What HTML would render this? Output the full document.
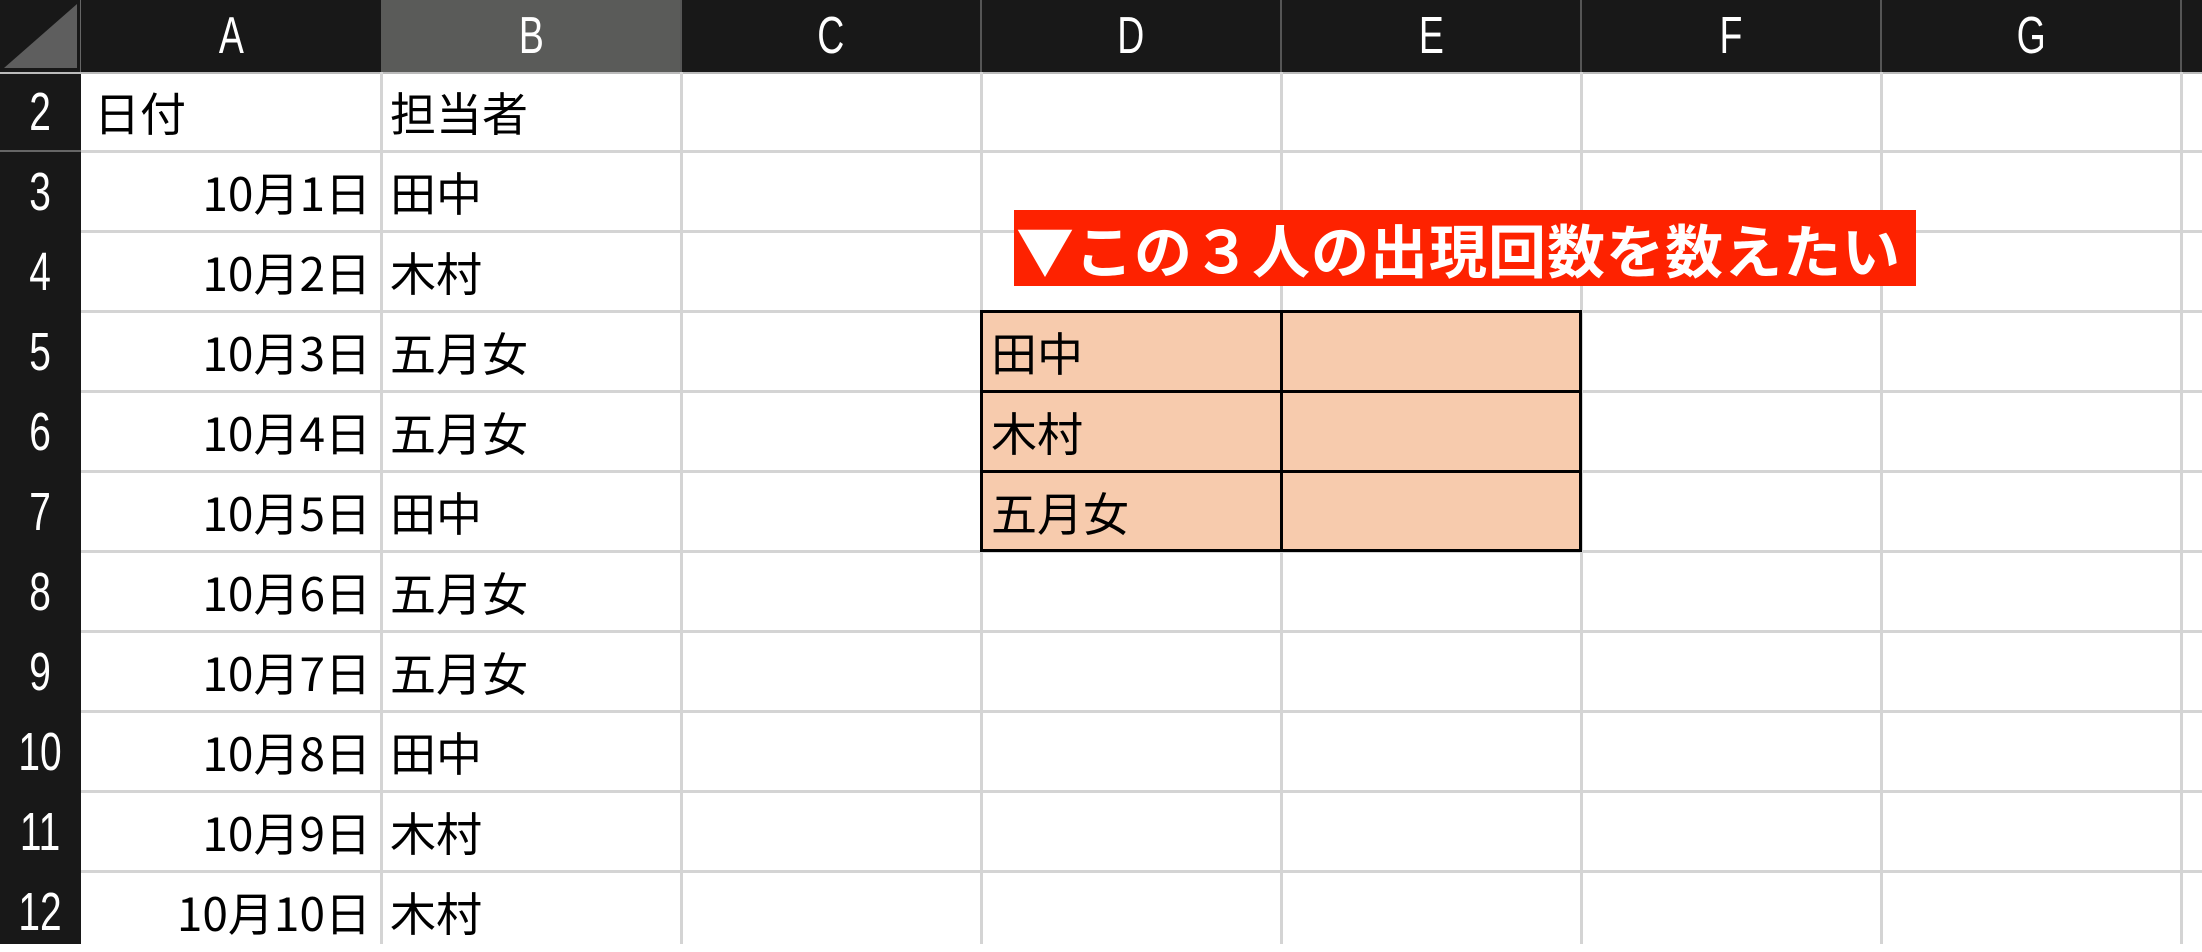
<!DOCTYPE html>
<html><head><meta charset="utf-8"><style>
*{margin:0;padding:0;box-sizing:border-box}
body{width:2202px;height:944px;overflow:hidden;background:#fff;position:relative;font-family:"Liberation Sans","Noto Sans CJK JP",sans-serif}
.a{position:absolute}
.vl{position:absolute;top:72px;width:3px;height:872px;background:#d4d4d4}
.hl{position:absolute;left:81px;width:2121px;height:3px;background:#d4d4d4}
.ch{position:absolute;top:0;height:72px;line-height:72px;text-align:center;color:#fff;font-size:52px;font-weight:300;width:300px}
.ch span,.rh span{display:inline-block;transform:scaleX(0.72)}
.rh{position:absolute;left:0;width:81px;height:80px;line-height:80px;text-align:center;color:#fff;font-size:54px;white-space:nowrap}
.t{position:absolute;height:80px;line-height:80px;font-size:46px;color:#000;font-family:"Noto Sans CJK JP",sans-serif;white-space:nowrap}
</style></head><body>
<div class="a" style="left:0;top:0;width:2202px;height:72px;background:#181818"></div>
<div class="a" style="left:0;top:72px;width:81px;height:872px;background:#181818"></div>
<div class="a" style="left:381px;top:0;width:300px;height:72px;background:#5a5b59"></div>
<svg class="a" style="left:0;top:0" width="81" height="72"><polygon points="4,68 77,68 77,4" fill="#5e5e5e"/><rect x="80" y="0" width="2" height="72" fill="#666"/></svg>
<div class="a" style="left:0;top:72px;width:2202px;height:2px;background:#bbb"></div>
<div class="ch" style="left:81px"><span>A</span></div><div class="ch" style="left:381px"><span>B</span></div><div class="ch" style="left:681px"><span>C</span></div><div class="ch" style="left:981px"><span>D</span></div><div class="ch" style="left:1281px"><span>E</span></div><div class="ch" style="left:1581px"><span>F</span></div><div class="ch" style="left:1881px"><span>G</span></div>
<div class="a" style="left:680px;top:0;width:2px;height:72px;background:#555"></div>
<div class="a" style="left:980px;top:0;width:2px;height:72px;background:#555"></div>
<div class="a" style="left:1280px;top:0;width:2px;height:72px;background:#555"></div>
<div class="a" style="left:1580px;top:0;width:2px;height:72px;background:#555"></div>
<div class="a" style="left:1880px;top:0;width:2px;height:72px;background:#555"></div>
<div class="a" style="left:2180px;top:0;width:2px;height:72px;background:#555"></div>
<div class="vl" style="left:380px"></div><div class="vl" style="left:680px"></div><div class="vl" style="left:980px"></div><div class="vl" style="left:1280px"></div><div class="vl" style="left:1580px"></div><div class="vl" style="left:1880px"></div><div class="vl" style="left:2180px"></div>
<div class="hl" style="top:150px"></div><div class="hl" style="top:230px"></div><div class="hl" style="top:310px"></div><div class="hl" style="top:390px"></div><div class="hl" style="top:470px"></div><div class="hl" style="top:550px"></div><div class="hl" style="top:630px"></div><div class="hl" style="top:710px"></div><div class="hl" style="top:790px"></div><div class="hl" style="top:870px"></div>
<div class="a" style="left:0;top:150px;width:81px;height:2px;background:#666"></div>
<div class="rh" style="top:72px"><span>2</span></div><div class="rh" style="top:152px"><span>3</span></div><div class="rh" style="top:232px"><span>4</span></div><div class="rh" style="top:312px"><span>5</span></div><div class="rh" style="top:392px"><span>6</span></div><div class="rh" style="top:472px"><span>7</span></div><div class="rh" style="top:552px"><span>8</span></div><div class="rh" style="top:632px"><span>9</span></div><div class="rh" style="top:712px"><span>10</span></div><div class="rh" style="top:792px"><span>11</span></div><div class="rh" style="top:872px"><span>12</span></div>
<div class="t" style="left:94px;top:72px">日付</div><div class="t" style="left:390px;top:72px">担当者</div>
<div class="t" style="left:81px;width:290px;text-align:right;top:152px">10月1日</div><div class="t" style="left:390px;top:152px">田中</div>
<div class="t" style="left:81px;width:290px;text-align:right;top:232px">10月2日</div><div class="t" style="left:390px;top:232px">木村</div>
<div class="t" style="left:81px;width:290px;text-align:right;top:312px">10月3日</div><div class="t" style="left:390px;top:312px">五月女</div>
<div class="t" style="left:81px;width:290px;text-align:right;top:392px">10月4日</div><div class="t" style="left:390px;top:392px">五月女</div>
<div class="t" style="left:81px;width:290px;text-align:right;top:472px">10月5日</div><div class="t" style="left:390px;top:472px">田中</div>
<div class="t" style="left:81px;width:290px;text-align:right;top:552px">10月6日</div><div class="t" style="left:390px;top:552px">五月女</div>
<div class="t" style="left:81px;width:290px;text-align:right;top:632px">10月7日</div><div class="t" style="left:390px;top:632px">五月女</div>
<div class="t" style="left:81px;width:290px;text-align:right;top:712px">10月8日</div><div class="t" style="left:390px;top:712px">田中</div>
<div class="t" style="left:81px;width:290px;text-align:right;top:792px">10月9日</div><div class="t" style="left:390px;top:792px">木村</div>
<div class="t" style="left:81px;width:290px;text-align:right;top:872px">10月10日</div><div class="t" style="left:390px;top:872px">木村</div>
<div class="a" style="left:980px;top:310px;width:602px;height:242px;background:#f7cbad;border:3px solid #000"></div>
<div class="a" style="left:1280px;top:310px;width:3px;height:242px;background:#000"></div>
<div class="a" style="left:980px;top:390px;width:602px;height:3px;background:#000"></div>
<div class="a" style="left:980px;top:470px;width:602px;height:3px;background:#000"></div>
<div class="t" style="left:991px;top:312px">田中</div><div class="t" style="left:991px;top:392px">木村</div><div class="t" style="left:991px;top:472px">五月女</div>
<div class="a" style="left:1014px;top:210px;width:902px;height:76px;background:#fe2200;color:#fff;font-weight:bold;font-size:58px;line-height:76px;white-space:nowrap;padding-left:2px;font-family:'Noto Sans CJK JP',sans-serif;letter-spacing:1px;overflow:hidden">▼この３人の出現回数を数えたい</div>
</body></html>
